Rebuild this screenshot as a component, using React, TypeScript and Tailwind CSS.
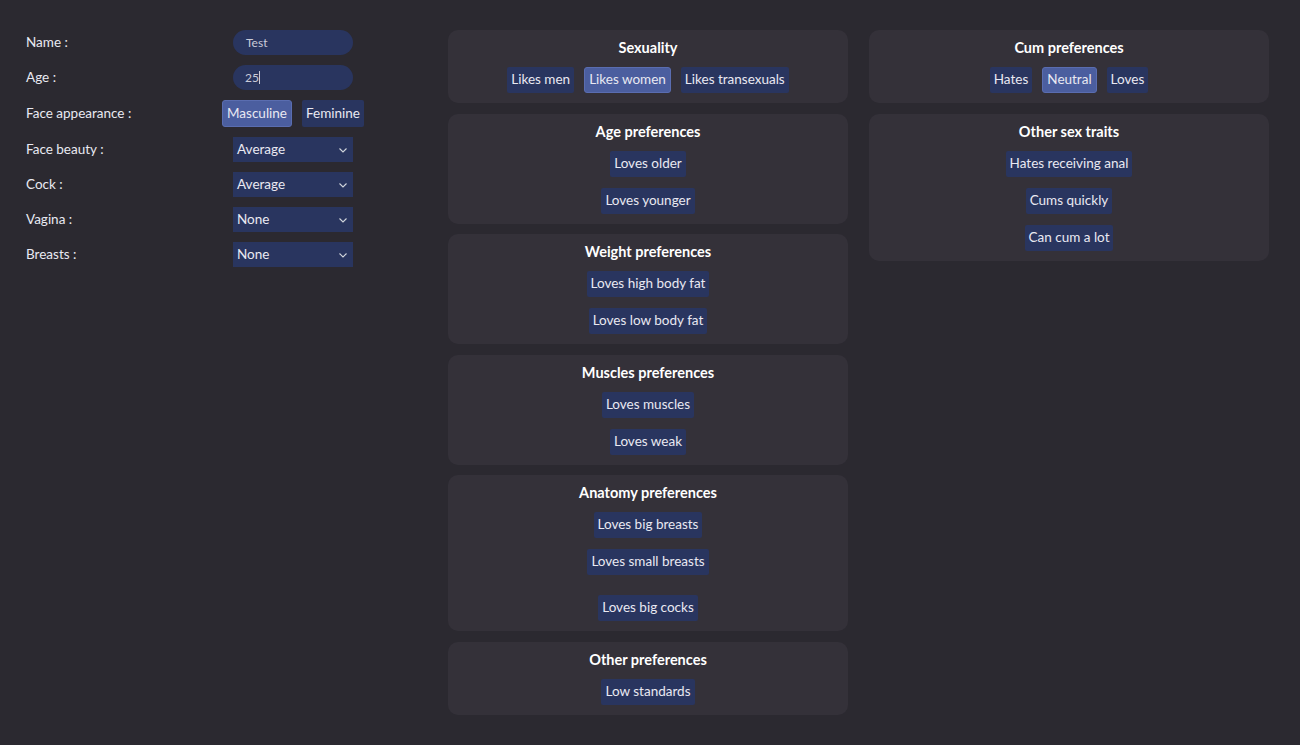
import { useState } from "react";

const font = { fontFamily: '"Segoe UI", Lato, "Noto Sans", sans-serif' };

function Chevron() {
    return (
        <svg width="12" height="12" viewBox="0 0 12 12" className="text-gray-300">
            <path d="M2.5 4.5 L6 8 L9.5 4.5" fill="none" stroke="currentColor" strokeWidth="1.1" />
        </svg>
    );
}

function Pill({ label, active, onClick, className = "" }: { label: string; active?: boolean; onClick?: () => void; className?: string }) {
    return (
        <button
            onClick={onClick}
            className={`h-[26px] px-[4px] text-[13.5px] leading-none text-[#e9e9f2] rounded-[2px] ${
                active ? "bg-[#4b5e9f] border border-[#5a6db0] rounded-[3px]" : "bg-[#29355f]"
            } ${className}`}
        >
            {label}
        </button>
    );
}

function Card({ title, children, row }: { title: string; children: React.ReactNode; row?: boolean }) {
    return (
        <div className="bg-[#343139] rounded-[10px] pt-[9px] pb-[10px] flex flex-col items-center">
            <div className="text-[14.5px] leading-[17px] font-bold text-white">{title}</div>
            <div className={`mt-[11px] flex ${row ? "flex-row gap-[10px]" : "flex-col items-center gap-[11px]"}`}>
                {children}
            </div>
        </div>
    );
}

function Row({ label, children }: { label: string; children: React.ReactNode }) {
    return (
        <div className="flex items-center">
            <div className="w-[187px] text-[13.5px] text-[#e9e9f2]">{label}</div>
            <div className="w-[160px] flex justify-center">{children}</div>
        </div>
    );
}

function Select({ value }: { value: string }) {
    return (
        <div className="w-[120px] h-[25px] bg-[#29355f] flex items-center justify-between pl-[4px] pr-[4px] text-[13.5px] text-[#e9e9f2]">
            <span>{value}</span>
            <Chevron />
        </div>
    );
}

export default function App() {
    const [sexuality, setSexuality] = useState("Likes women");
    const [cum, setCum] = useState("Neutral");
    const [face, setFace] = useState("Masculine");

    return (
        <div style={font} className="min-h-[745px] w-full bg-[#2b2930] flex pt-[30px] pl-[26px]">
            <div className="w-[422px] flex flex-col gap-[10px]">
                <Row label="Name :">
                    <div className="w-[120px] h-[25px] rounded-full bg-[#29355f] pl-[13px] flex items-center text-[12px] text-[#c9cbd8]">
                        Test
                    </div>
                </Row>
                <Row label="Age :">
                    <div className="w-[120px] h-[25px] rounded-full bg-[#29355f] pl-[12px] flex items-center text-[12px] text-[#c9cbd8]">
                        25<span className="w-px h-[13px] bg-[#c9cbd8]" />
                    </div>
                </Row>
                <Row label="Face appearance :">
                    <div className="flex gap-[10px]">
                        {["Masculine", "Feminine"].map((f) => (
                            <Pill key={f} label={f} active={face === f} onClick={() => setFace(f)} className="h-[27px]" />
                        ))}
                    </div>
                </Row>
                <Row label="Face beauty :">
                    <Select value="Average" />
                </Row>
                <Row label="Cock :">
                    <Select value="Average" />
                </Row>
                <Row label="Vagina :">
                    <Select value="None" />
                </Row>
                <Row label="Breasts :">
                    <Select value="None" />
                </Row>
            </div>

            <div className="w-[400px] flex flex-col gap-[10.5px]">
                <Card title="Sexuality" row>
                    {["Likes men", "Likes women", "Likes transexuals"].map((s) => (
                        <Pill key={s} label={s} active={sexuality === s} onClick={() => setSexuality(s)} />
                    ))}
                </Card>
                <Card title="Age preferences">
                    <Pill label="Loves older" />
                    <Pill label="Loves younger" />
                </Card>
                <Card title="Weight preferences">
                    <Pill label="Loves high body fat" />
                    <Pill label="Loves low body fat" />
                </Card>
                <Card title="Muscles preferences">
                    <Pill label="Loves muscles" />
                    <Pill label="Loves weak" />
                </Card>
                <Card title="Anatomy preferences">
                    <Pill label="Loves big breasts" />
                    <Pill label="Loves small breasts" />
                    <Pill label="Loves big cocks" className="mt-[9px]" />
                </Card>
                <Card title="Other preferences">
                    <Pill label="Low standards" />
                </Card>
            </div>

            <div className="w-[400px] ml-[21px] flex flex-col gap-[10.5px]">
                <Card title="Cum preferences" row>
                    {["Hates", "Neutral", "Loves"].map((c) => (
                        <Pill key={c} label={c} active={cum === c} onClick={() => setCum(c)} />
                    ))}
                </Card>
                <Card title="Other sex traits">
                    <Pill label="Hates receiving anal" />
                    <Pill label="Cums quickly" />
                    <Pill label="Can cum a lot" />
                </Card>
            </div>
        </div>
    );
}
